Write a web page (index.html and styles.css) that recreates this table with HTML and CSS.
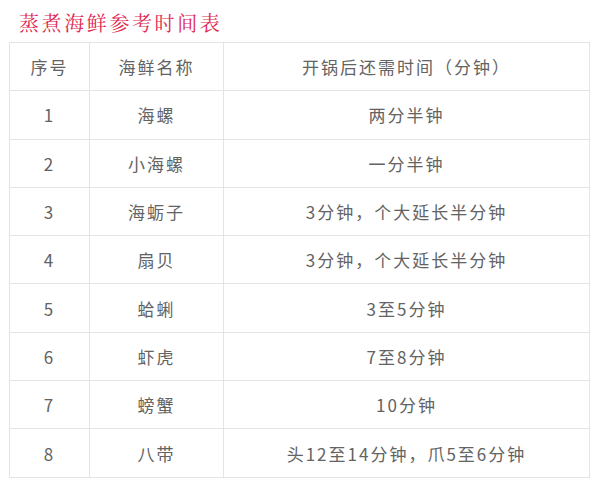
FILE: index.html
```html
<!DOCTYPE html>
<html lang="zh-CN">
<head>
<meta charset="utf-8">
<title>蒸煮海鲜参考时间表</title>
<link rel="stylesheet" href="styles.css">
</head>
<body>
<div class="page">
  <h1 class="title">蒸煮海鲜参考时间表</h1>
  <table class="chart">
    <colgroup>
      <col class="c-no">
      <col class="c-name">
      <col class="c-time">
    </colgroup>
    <thead>
      <tr><th>序号</th><th>海鲜名称</th><th>开锅后还需时间（分钟）</th></tr>
    </thead>
    <tbody>
      <tr><td>1</td><td>海螺</td><td>两分半钟</td></tr>
      <tr><td>2</td><td>小海螺</td><td>一分半钟</td></tr>
      <tr><td>3</td><td>海蛎子</td><td>3分钟，个大延长半分钟</td></tr>
      <tr><td>4</td><td>扇贝</td><td>3分钟，个大延长半分钟</td></tr>
      <tr><td>5</td><td>蛤蜊</td><td>3至5分钟</td></tr>
      <tr><td>6</td><td>虾虎</td><td>7至8分钟</td></tr>
      <tr><td>7</td><td>螃蟹</td><td>10分钟</td></tr>
      <tr><td>8</td><td>八带</td><td>头12至14分钟，爪5至6分钟</td></tr>
    </tbody>
  </table>
</div>
</body>
</html>
```

FILE: styles.css
```css
html, body {
  margin: 0;
  padding: 0;
  background: #ffffff;
}

.page {
  padding: 8px 11px 0 9px;
  width: 580px;
  font-family: "Noto Sans CJK SC", "Noto Sans", sans-serif;
}

.title {
  margin: 0 0 4px 0;
  padding-left: 10px;
  font-family: "Noto Serif CJK SC", "Noto Sans CJK SC", serif;
  font-size: 20px;
  font-weight: normal;
  line-height: 30px;
  letter-spacing: 2.6px;
  color: #e0284f;
}

.chart {
  width: 580px;
  border-collapse: collapse;
  table-layout: fixed;
}

.c-no { width: 80px; }
.c-name { width: 134px; }
.c-time { width: 366px; }

.chart th,
.chart td {
  height: 48.3px;
  padding: 0;
  border: 1px solid #e4e4e4;
  text-align: center;
  vertical-align: middle;
  font-size: 17px;
  font-weight: normal;
  letter-spacing: 2px;
  color: #636363;
  box-sizing: border-box;
}
```
